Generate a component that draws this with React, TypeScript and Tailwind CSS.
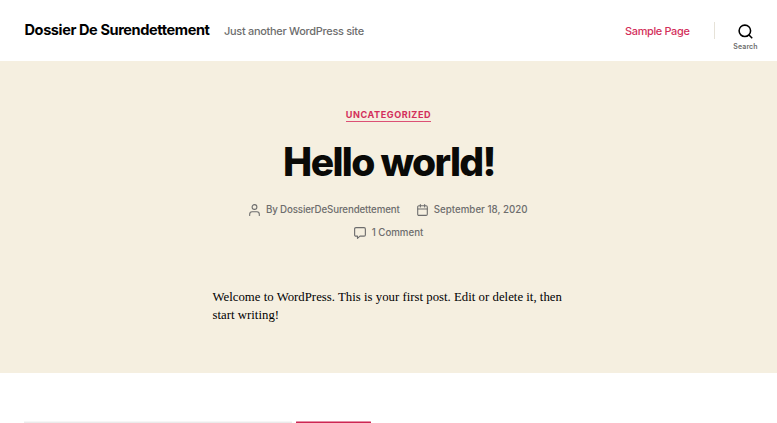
import React from 'react';

const SearchIcon: React.FC = () => (
  <svg className="h-[15px] w-[15px]" viewBox="0 0 23 23" fill="none" stroke="currentColor" strokeWidth="2.4">
    <circle cx="10.500" cy="10.500" r="8.800" />
    <path d="M16.500 16.500 21.800 21.800" />
  </svg>
);

const UserIcon: React.FC = () => (
  <svg className="h-[12px] w-[11px]" viewBox="0 0 18 20" fill="none" stroke="currentColor" strokeWidth="1.8" strokeLinecap="round">
    <circle cx="9" cy="5" r="4" />
    <path d="M1 19v-2a4 4 0 0 1 4-4h8a4 4 0 0 1 4 4v2" />
  </svg>
);

const CalendarIcon: React.FC = () => (
  <svg className="h-[12px] w-[11px]" viewBox="0 0 18 20" fill="none" stroke="currentColor" strokeWidth="1.8" strokeLinecap="round">
    <rect x="1" y="3" width="16" height="16" rx="2" />
    <path d="M1 8.2h16M5.4 1v4M12.6 1v4" />
  </svg>
);

const CommentIcon: React.FC = () => (
  <svg className="h-[12px] w-[12px]" viewBox="0 0 19 19" fill="none" stroke="currentColor" strokeWidth="1.8" strokeLinejoin="round">
    <path d="M3 1h13a2 2 0 0 1 2 2v9.500a2 2 0 0 1-2 2H9.500L5.500 18v-3.500H3a2 2 0 0 1-2-2V3a2 2 0 0 1 2-2z" />
  </svg>
);

const Header: React.FC = () => (
  <header className="flex h-[61px] items-start justify-between bg-white pl-[24.500px] pr-[18.500px]">
    <div className="flex h-[61px] items-center whitespace-nowrap">
      <h1 className="w-[199.500px] text-[14.570px] font-bold tracking-[-0.41px] text-black">
        Dossier De Surendettement
      </h1>
      <p className="mt-[2px] text-[10.930px] font-medium tracking-[-0.27px] text-[#6d6d6d]">Just another WordPress site</p>
    </div>
    <div className="flex items-start">
      <a className="mt-[22px] whitespace-nowrap text-[10.930px] leading-[18px] font-medium tracking-[-0.34px] text-[#d32f5b]">
        Sample Page
      </a>
      <div className="mt-[22px] ml-6 h-[17px] w-px bg-[#e6e2d8]" />
      <button className="mt-6 ml-[18px] flex w-[26px] flex-col items-center text-black">
        <SearchIcon />
        <span className="mt-[3px] text-[7px] leading-[9px] font-semibold tracking-[0.1px] text-[#6d6d6d]">Search</span>
      </button>
    </div>
  </header>
);

const Post: React.FC = () => (
  <article className="flex h-[312px] flex-col items-center bg-[#f5efe0]">
    <a className="mt-[48px] h-[13px] border-b border-[#dc5075] text-[9.100px] leading-[12px] font-bold tracking-[0.55px] text-[#d32f5b] uppercase">
      Uncategorized
    </a>
    <h2 className="mt-[16px] pl-px text-[39px] leading-[48px] font-extrabold tracking-[-1.65px] whitespace-nowrap text-[#0a0a08]">
      Hello world!
    </h2>
    <ul className="mt-[12px] flex w-[350px] flex-wrap justify-center gap-x-[17.500px] text-[9.710px] leading-[23px] font-medium text-[#6d6d6d]">
      <li className="flex items-center gap-[5.500px]">
        <UserIcon />
        <span className="tracking-[-0.12px]">By DossierDeSurendettement</span>
      </li>
      <li className="flex items-center gap-[5.500px]">
        <CalendarIcon />
        <span className="tracking-[0.03px]">September 18, 2020</span>
      </li>
      <li className="flex items-center gap-[6px]">
        <CommentIcon />
        <span>1 Comment</span>
      </li>
    </ul>
    <p className="mt-[44px] w-[352px] font-['Liberation_Serif',serif] text-[12.750px] leading-[18px] tracking-[0.024px] text-black">
      Welcome to WordPress. This is your first post. Edit or delete it, then start writing!
    </p>
  </article>
);

const Widgets: React.FC = () => (
  <div className="flex gap-[4px] bg-white pt-[48px] pl-6">
    <div className="h-[2px] w-[268px] border-t border-[#f6f6f6] bg-[#ebebeb]" />
    <div className="h-[2px] w-[75px] rounded-t-[1px] border-t border-[#e58fa5] bg-[#cd2653]" />
  </div>
);

const App: React.FC = () => {
  return (
    <div className="h-[423px] w-full overflow-hidden bg-white font-['Inter',sans-serif]">
      <Header />
      <Post />
      <Widgets />
    </div>
  );
};

export default App;
